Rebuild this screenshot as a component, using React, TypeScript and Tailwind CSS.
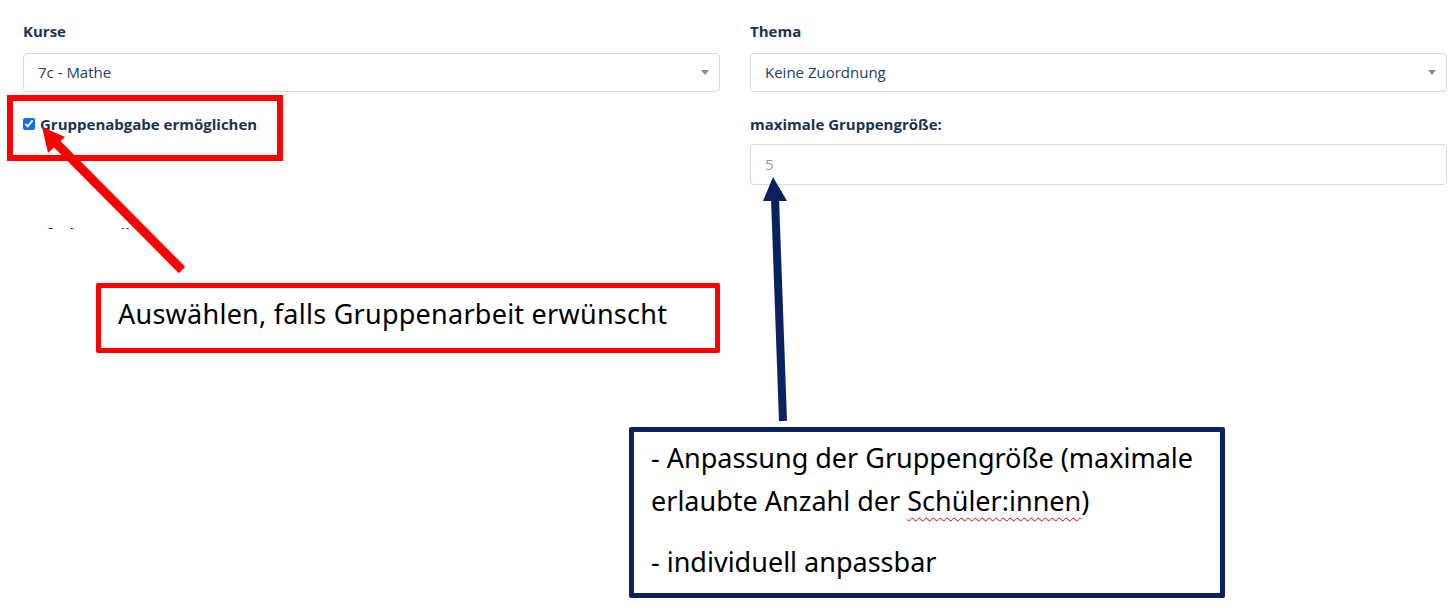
import React from "react";

const uiFont = { fontFamily: "'Open Sans', 'Noto Sans', sans-serif" };
const noteFont = { fontFamily: "'Noto Sans', Inter, sans-serif" };

function Caret() {
  return (
    <svg width="8" height="5" viewBox="0 0 8 5" className="shrink-0">
      <path d="M0 0 L8 0 L4 5 Z" fill="#8a8a8a" />
    </svg>
  );
}

function SelectBox({ value }: { value: string }) {
  return (
    <div className="flex h-[39px] items-center justify-between rounded-[4px] border border-[#d9d9d9] bg-white pl-[14px] pr-[10px]">
      <span className="text-[15px] text-[#24405f]">{value}</span>
      <Caret />
    </div>
  );
}

export default function App() {
  return (
    <div className="relative h-[612px] w-full overflow-hidden bg-white" style={uiFont}>
      <div className="grid grid-cols-2 gap-x-[30px] pl-[23px] pr-[5px] pt-[21px]">
        <div className="flex flex-col">
          <div className="mb-[12px] h-[20px] text-[15px] font-bold leading-[20px] text-[#1b3350]">Kurse</div>
          <SelectBox value="7c - Mathe" />
          <label className="mt-[22px] flex h-[20px] items-center gap-[5px] text-[15px] font-bold leading-[20px] text-[#1b3350]">
            <input type="checkbox" defaultChecked className="m-0 h-[12px] w-[12px] accent-[#0d6efd]" />
            <span>Gruppenabgabe ermöglichen</span>
          </label>
          <div className="mt-[93px] h-[2px] overflow-hidden">
            <div className="-mt-[4px] pl-[3px] text-[15px] font-bold leading-[20px] text-[#1b3350]">Aufgabenstellung</div>
          </div>
        </div>
        <div className="flex flex-col">
          <div className="mb-[12px] h-[20px] text-[15px] font-bold leading-[20px] text-[#1b3350]">Thema</div>
          <SelectBox value="Keine Zuordnung" />
          <div className="mb-[10px] mt-[22px] h-[20px] text-[15px] font-bold leading-[20px] text-[#1b3350]">maximale Gruppengröße:</div>
          <div className="flex h-[41px] items-center rounded-[4px] border border-[#d9d9d9] bg-white pl-[14px]">
            <span className="text-[15px] text-[#9a9a9a]">5</span>
          </div>
        </div>
      </div>

      {/* Annotations */}
      <div className="absolute left-[7px] top-[95px] h-[66px] w-[276px] border-[6px] border-[#ff0000]" />

      <div
        className="absolute left-[96px] top-[283px] h-[70px] w-[624px] rounded-[2px] border-[5px] border-[#ff0000] bg-white pl-[17px] pt-[7px]"
        style={noteFont}
      >
        <span className="text-[27px] leading-[38px] tracking-[0.25px] text-black">Auswählen, falls Gruppenarbeit erwünscht</span>
      </div>

      <div
        className="absolute left-[629px] top-[427px] h-[171px] w-[596px] rounded-[2px] border-[5px] border-[#0b2260] bg-white pl-[17px] pt-[4px]"
        style={noteFont}
      >
        <p className="text-[27px] leading-[43px] text-black">
          - Anpassung der Gruppengröße (maximale
          <br />
          erlaubte Anzahl der{" "}
          <span className="underline decoration-[#e00000] decoration-wavy decoration-1 underline-offset-[6px]">Schüler:innen</span>)
        </p>
        <p className="mt-[18px] text-[27px] leading-[43px] text-black">- individuell anpassbar</p>
      </div>

      <svg className="pointer-events-none absolute left-0 top-0" width="1452" height="612" viewBox="0 0 1452 612">
        <line x1="182" y1="270" x2="55" y2="142" stroke="#ff0000" strokeWidth="9" />
        <polygon points="42,127 65,137 48,153" fill="#ff0000" />
        <line x1="783" y1="421" x2="775" y2="198" stroke="#0b2260" strokeWidth="8" />
        <polygon points="773,177 787,201 763,201" fill="#0b2260" />
      </svg>
    </div>
  );
}
